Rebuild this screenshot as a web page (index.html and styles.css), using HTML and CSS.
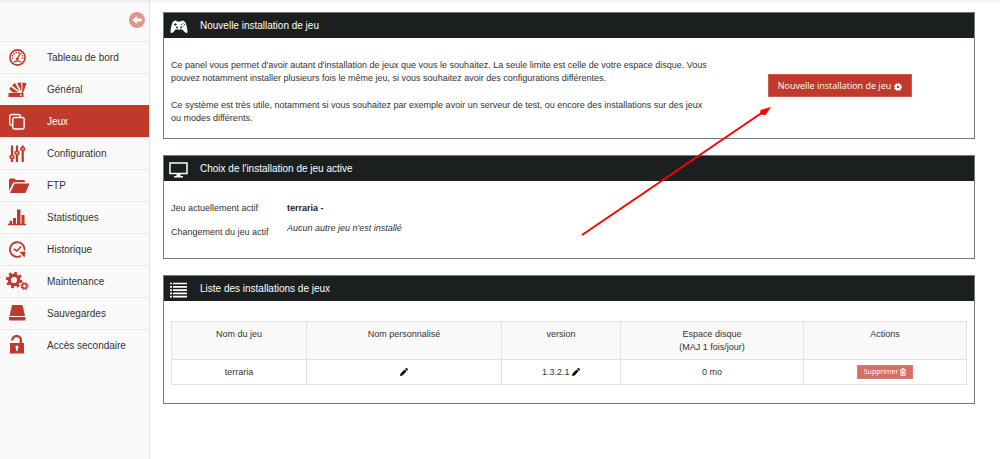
FILE: index.html
```html
<!DOCTYPE html>
<html lang="fr">
<head>
<meta charset="utf-8">
<meta name="viewport" content="width=device-width, initial-scale=1">
<title>Gestion des jeux</title>
<link rel="stylesheet" href="styles.css">
</head>
<body>
<div class="layout">
  <aside class="sidebar">
    <div class="sidebar-top">
      <button class="collapse" type="button" aria-label="Réduire le menu">
        <svg viewBox="0 0 16 16" width="16" height="16"><circle cx="8" cy="8" r="8" fill="#e0968e"/><path d="M3.5 8 7.800 4v2.500h4.700v3H7.800V12z" fill="#fff"/></svg>
      </button>
    </div>
    <nav class="menu">
      <a href="#" class="item"><svg class="icon" viewBox="0 0 24 24"><g fill="none" stroke="currentColor"><circle cx="9.500" cy="11.500" r="7.600" stroke-width="1.600"/><path d="M4.500 13a5.200 5.200 0 1 1 10 0" stroke-width="1.500" stroke-dasharray="1.400 1.100"/><path d="M5.500 16q4-1.800 8 0M9 13.500 12 7.500" stroke-width="1.300"/></g><circle cx="9.200" cy="13.100" r="1.500" fill="currentColor"/></svg>Tableau de bord</a>
      <a href="#" class="item"><svg class="icon" viewBox="0 0 24 24" fill="currentColor"><path fill-rule="evenodd" d="M.500 15h15v4H.500zM12 16.200v1.500h1.500v-1.500z"/><path d="m1.300 11 1.400-2.200 8 5.600H4.700zM4 7.300l3-2.300 4.600 8.800zM9.200 5l4-.500.200 9.200zM14.500 4.500l4 .700-3.200 9-.800 3.500-.4-3.300z"/></svg>Général</a>
      <a href="#" class="item active" aria-current="page"><svg class="icon" viewBox="0 0 24 24" fill="none" stroke="currentColor" stroke-width="1.400"><path d="M4.500 15.300h-1A2 2 0 0 1 1.700 13.300V6.500a2 2 0 0 1 2-2H10.500a2 2 0 0 1 2 2V7"/><rect x="4.700" y="7.500" width="11.500" height="11.500" rx="2"/></svg>Jeux</a>
      <a href="#" class="item"><svg class="icon" viewBox="0 0 24 24" fill="none" stroke="currentColor"><path d="M4 3.500V20M9 3.500V20M14.700 3.500V20" stroke-width="2.200"/><path d="M1.500 15H6.500M6.500 11H11.500M12.200 7H17.200" stroke-width="3.600"/><path d="M3 15h2M8 11h2M13.700 7h2" stroke="#fafafa" stroke-width="1"/></svg>Configuration</a>
      <a href="#" class="item"><svg class="icon" viewBox="0 0 24 24" fill="currentColor"><path d="M1 17V6Q1 4.500 2.500 4.500H6.500L8 6h7.500Q17 6 17 7.500v.700H6.500Q5.200 8.200 4.700 9.500z"/><path d="M6.600 9.500H21.500L17.500 19H2z"/></svg>FTP</a>
      <a href="#" class="item"><svg class="icon" viewBox="0 0 24 24" fill="currentColor"><path d="M0 17.800H18V19.300H0zM1.500 14.800h2.700V18H1.500zM5 12h3V18H5zM9 3.500h3.500V18H9zM13.500 9H16.500V18H13.500z"/></svg>Statistiques</a>
      <a href="#" class="item"><svg class="icon" viewBox="0 0 24 24" fill="none" stroke="currentColor" stroke-width="1.800"><path d="M13 17.800A7.300 7.300 0 1 1 16.500 12.500"/><path d="m5.800 11 3.200 2L13 8.500" stroke-width="1.600"/><path d="M11.500 14 17.500 13.500l-1 6z" fill="currentColor" stroke="none"/></svg>Historique</a>
      <a href="#" class="item"><svg class="icon" viewBox="0 0 24 24" fill="none" stroke="currentColor"><circle cx="6" cy="10" r="4.700" stroke-width="3.200"/><circle cx="6" cy="10" r="7" stroke-width="2.600" stroke-dasharray="2.749 2.749"/><circle cx="16.500" cy="16" r="2.300" stroke-width="1.500"/><circle cx="16.500" cy="16" r="3.500" stroke-width="1.300" stroke-dasharray="1.374 1.374"/></svg>Maintenance</a>
      <a href="#" class="item"><svg class="icon" viewBox="0 0 24 24" fill="currentColor"><path d="M4 3h10.500L17 14H1.500zM1 15h16.500V17.500q0 1-1 1H2q-1 0-1-1z"/></svg>Sauvegardes</a>
      <a href="#" class="item"><svg class="icon" viewBox="0 0 24 24" fill="currentColor"><path fill-rule="evenodd" d="M2 9H16V19.500H2zM9 11.500a1.700 1.700 0 0 0-.8 3.100V17H9.800V14.600A1.700 1.700 0 0 0 9 11.500z"/><path d="M4.300 6.500V6.300a4.300 4.300 0 0 1 8.600 0V9.500" fill="none" stroke="currentColor" stroke-width="2.400"/></svg>Accès secondaire</a>
    </nav>
  </aside>

  <main class="content">
    <section class="panel">
      <h2 class="panel-title"><svg class="title-icon" viewBox="0 0 20 20"><path d="M5 5Q7 4 8 5.500h4Q13 4 15 5 17 6 17.600 10 19 16 18 17 16.500 17.500 13.500 13.500h-7Q3.500 17.500 2 17 1 16 2.400 10 3 6 5 5z" fill="#fff"/><path d="M4.800 8.500h3M6.300 7v3" stroke="#1b1f20" stroke-width=".8"/><g fill="#1b1f20"><circle cx="14" cy="7" r=".6"/><circle cx="14" cy="10" r=".6"/><circle cx="12.500" cy="8.500" r=".6"/><circle cx="15.500" cy="8.500" r=".6"/><circle cx="8" cy="11.500" r="1"/><circle cx="12" cy="11.500" r="1"/></g></svg>Nouvelle installation de jeu</h2>
      <div class="intro">
        <div class="intro-text">
          <p>Ce panel vous permet d'avoir autant d'installation de jeux que vous le souhaitez. La seule limite est celle de votre espace disque. Vous pouvez notamment installer plusieurs fois le même jeu, si vous souhaitez avoir des configurations différentes.</p>
          <p>Ce système est très utile, notamment si vous souhaitez par exemple avoir un serveur de test, ou encore des installations sur des jeux ou modes différents.</p>
        </div>
        <div class="intro-action">
          <button class="btn" type="button">Nouvelle installation de jeu <svg class="btn-icon" viewBox="0 0 10 10" fill="none" stroke="currentColor"><circle cx="5" cy="5" r="2.800" stroke-width="2.400"/><circle cx="5" cy="5" r="4.200" stroke-width="1.600" stroke-dasharray="1.649 1.649"/></svg></button>
        </div>
      </div>
    </section>

    <section class="panel">
      <h2 class="panel-title"><svg class="title-icon" viewBox="0 0 20 20"><path d="M1 4h17v10.500H1z" fill="none" stroke="#fff" stroke-width="1.500"/><path d="M7.500 15h4v2H14v1.500H5V17h2.500z" fill="#fff"/></svg>Choix de l'installation de jeu active</h2>
      <dl class="facts">
        <dt>Jeu actuellement actif</dt><dd><strong>terraria -</strong></dd>
        <dt>Changement du jeu actif</dt><dd class="none"><em>Aucun autre jeu n'est installé</em></dd>
      </dl>
    </section>

    <section class="panel">
      <h2 class="panel-title"><svg class="title-icon" viewBox="0 0 20 20"><path d="M1 4.500h2m1 0h14M1 7.800h2m1 0h14M1 11.100h2m1 0h14M1 14.400h2m1 0h14M1 17.700h2m1 0h14" stroke="#fff" stroke-width="1.700"/></svg>Liste des installations de jeux</h2>
      <div class="table-wrap">
        <table class="games">
          <colgroup><col class="c-name"><col class="c-custom"><col class="c-version"><col class="c-disk"><col class="c-actions"></colgroup>
          <thead><tr><th>Nom du jeu</th><th>Nom personnalisé</th><th>version</th><th>Espace disque<br>(MAJ 1 fois/jour)</th><th>Actions</th></tr></thead>
          <tbody><tr>
            <td>terraria</td>
            <td><button class="edit" type="button" aria-label="Modifier le nom"><svg viewBox="0 0 8 8" width="8" height="8"><path d="M0 8 .6 5.500 4.700 1.400 6.600 3.300 2.500 7.400zM5.200.9 6 .1q.4-.2.700 0L7.900 1.300q.2.300 0 .700L7.100 2.800z"/></svg></button></td>
            <td>1.3.2.1 <button class="edit" type="button" aria-label="Modifier la version"><svg viewBox="0 0 8 8" width="8" height="8"><path d="M0 8 .6 5.500 4.700 1.400 6.600 3.300 2.500 7.400zM5.200.9 6 .1q.4-.2.700 0L7.900 1.300q.2.300 0 .700L7.100 2.800z"/></svg></button></td>
            <td>0 mo</td>
            <td><button class="btn btn-small" type="button">Supprimer <svg class="trash" viewBox="0 0 6 8" fill="none" stroke="currentColor" stroke-width=".9"><path d="M0 1.900h6M2 1.700V.6h2v1.100M.9 2v5.400h4.200V2M2.300 3v3.400M3.700 3v3.400"/></svg></button></td>
          </tr></tbody>
        </table>
      </div>
    </section>
  </main>
</div>
<svg class="pointer" viewBox="0 0 190 130" aria-hidden="true"><path d="M1 129 182 6" stroke="#f00" stroke-width="2"/><path d="M190 1 184.500 9 179 8.500 179.500 4z" fill="#f00"/></svg>
</body>
</html>
```
FILE: styles.css
```css
* { box-sizing: border-box; }

body {
  margin: 0;
  background: #fff;
  color: #333;
  font: 9px/13px "Liberation Sans", Arial, sans-serif;
}

.layout {
  display: flex;
  min-height: 100vh;
  background: linear-gradient(#f0f0f0, #fff 4px);
}

.sidebar {
  flex: 0 0 150px;
  background: linear-gradient(#ececec, #fafafa 4px);
  border-right: 1px solid #e2e2e2;
}

.sidebar-top {
  display: flex;
  justify-content: flex-end;
  height: 41px;
  padding: 12px 4px 0 0;
}

.collapse, .edit {
  padding: 0;
  border: 0;
  background: none;
  cursor: pointer;
}

.collapse { height: 16px; }
.collapse svg, .edit svg { display: block; }
.edit { display: inline-block; vertical-align: middle; }

.item {
  display: flex;
  align-items: center;
  gap: 15px;
  height: 32px;
  padding-left: 8px;
  border-top: 1px solid #e8e8e8;
  color: #333;
  font-size: 10px;
  text-decoration: none;
}

.icon {
  width: 24px;
  height: 24px;
  overflow: visible;
  color: #c0392b;
}

.active { background: #c0392b; border-color: #c0392b; color: #fff; }
.active .icon { color: #fff; }

.content {
  flex: 1;
  display: flex;
  flex-direction: column;
  gap: 16px;
  padding: 12px 25px 12px 13px;
}

.panel { border: 1px solid #777; }

.panel-title {
  display: flex;
  align-items: center;
  gap: 11px;
  height: 25px;
  margin: 0;
  padding-left: 5px;
  background: #1b1f20;
  color: #fff;
  font-size: 10px;
  font-weight: normal;
}

.title-icon { width: 20px; height: 20px; }

.intro {
  display: flex;
  align-items: flex-start;
  padding: 21px 7px 13px;
}

.intro-text { flex: 0 0 68%; }
.intro-text p { margin: 0 0 14px; }
.intro-text p:last-child { margin: 0; }
.intro-action { flex: 1; padding-top: 15px; text-align: center; }

.btn {
  padding: 5px 9px;
  border: 1px solid #cb5e53;
  background: #c0392b;
  color: #fff;
  font: 9px/11px "Open Sans", "Noto Sans", sans-serif;
  cursor: pointer;
}

.btn-icon { width: 8px; height: 8px; vertical-align: middle; }

.facts {
  display: grid;
  grid-template-columns: 116px 1fr;
  row-gap: 11px;
  margin: 0;
  padding: 21px 7px 19px;
}

.facts dd { margin: 0; }
.facts .none { margin-top: -4px; }
strong { color: #222; }

.table-wrap { padding: 20px 7px 18px; }

.games {
  width: 100%;
  table-layout: fixed;
  border-collapse: collapse;
  text-align: center;
}

.c-name { width: 17%; }
.c-custom { width: 24.5%; }
.c-version { width: 15%; }
.c-disk { width: 23%; }
.c-actions { width: 20.5%; }

.games th, .games td { border: 1px solid #e2e2e2; }
.games th { padding: 6px 4px 5px; background: #f9f9f9; font-weight: normal; vertical-align: top; }
.games td { height: 25px; padding: 0 4px; }

.btn-small {
  padding: 0 6px;
  border-color: #d88078;
  background: #d36f65;
  font-size: 7px;
  line-height: 12px;
}

.trash { width: 6px; height: 8px; vertical-align: middle; }

.pointer {
  position: absolute;
  left: 581px;
  top: 106px;
  width: 190px;
  height: 130px;
  pointer-events: none;
}
```
